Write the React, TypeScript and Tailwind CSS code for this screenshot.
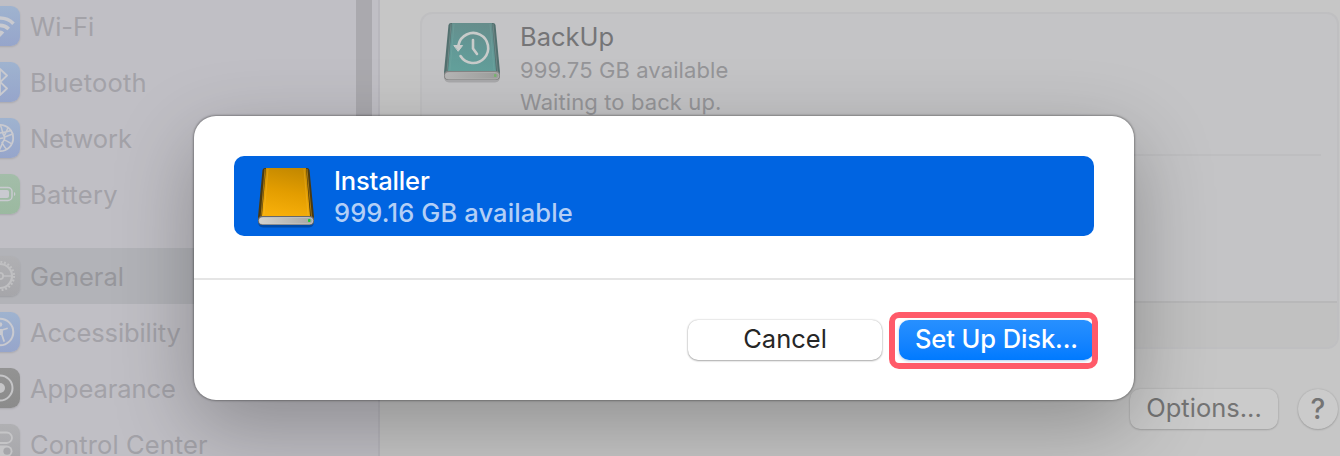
import type { ReactNode } from "react";

function Tile({ color, children }: { color: string; children: ReactNode }) {
  return (
    <span className={`-ml-5 block size-10 shrink-0 rounded-[9px] shadow-[0_1px_2px_rgba(0,0,0,0.12)] ${color}`}>
      <svg viewBox="0 0 40 40" className="size-10" fill="none" stroke="#c9cad0" strokeWidth="2" strokeLinecap="round" strokeLinejoin="round">
        {children}
      </svg>
    </span>
  );
}

const blue = "bg-linear-to-b from-[#9fb3cf] to-[#96a5cb]";
const gray = "bg-linear-to-b from-[#b0b0b3] to-[#a6a6aa]";

function WifiIcon() {
  return (
    <g strokeLinecap="butt">
      <path d="M6.5 17.7a19 19 0 0 1 27 0" strokeWidth="3.6" />
      <path d="M11.3 23a12.3 12.3 0 0 1 17.4 0" strokeWidth="3.6" />
      <path d="M20 31l-4.3-4.6a6 6 0 0 1 8.6 0z" fill="#c9cad0" stroke="none" />
    </g>
  );
}

function BluetoothIcon() {
  return <path d="M13.5 13.5L27 26.5 20 33V7l7 6.5-13.5 13" strokeWidth="1.8" />;
}

function NetworkIcon() {
  return (
    <g strokeWidth="1.5">
      <circle cx="20" cy="20" r="13.2" strokeWidth="1.8" />
      <path d="M20 7c2.600 3 1.500 7 4 11 1 1.500 1.200 2 0 4-2 3.200-2.500 6-5 10.800M28 9.500c-1.500 3.500-2 6-4 8.500M24.700 19l8-3M24 22c2.500.500 4.500 2 7 3.500M20 15c5-.500 8-1.500 11-2.500M22 24.500c1.500 3 2.500 5 4.500 6.500M8 17c4 3 8 4.500 15 3M12 10c-1 8 1 14 7 22" />
    </g>
  );
}

function BatteryIcon() {
  return (
    <g>
      <rect x="5" y="13.500" width="27" height="13" rx="4" strokeWidth="1.500" />
      <rect x="8" y="16" width="21" height="8" rx="2" fill="#c9cad0" stroke="none" />
      <path d="M34 18v4c1.800-.700 1.800-3.300 0-4z" fill="#c9cad0" stroke="none" />
    </g>
  );
}

function GearIcon() {
  return (
    <g>
      <circle cx="20" cy="20" r="14" stroke="#c0c0c2" strokeWidth="2.200" strokeDasharray="1.900 1.765" strokeLinecap="butt" />
      <circle cx="20" cy="20" r="12" stroke="#c0c0c2" strokeWidth="2.200" />
      <circle cx="20" cy="20" r="3.200" stroke="#c0c0c2" strokeWidth="1.700" />
      <path d="M23.200 20H32M18.400 17.200 14 9.600M18.400 22.800 14 30.400" stroke="#c0c0c2" strokeWidth="1.700" />
    </g>
  );
}

function AccessibilityIcon() {
  return (
    <g>
      <circle cx="20" cy="20" r="13.300" />
      <circle cx="20" cy="12.500" r="2.300" fill="#c9cad0" stroke="none" />
      <path d="M13 16.500l5 1.500v5l-2 6M27 16.500 22 18v5l2 6" strokeWidth="1.800" />
      <path d="M18 17h4v6h-4z" fill="#c9cad0" stroke="none" />
    </g>
  );
}

function AppearanceIcon() {
  return (
    <g stroke="#c5c5c7">
      <circle cx="20" cy="20" r="12.500" />
      <circle cx="20" cy="20" r="5" fill="#c5c5c7" stroke="none" />
    </g>
  );
}

function ControlIcon() {
  return (
    <g stroke="#c5c5c7" strokeWidth="1.800">
      <rect x="7.500" y="8.500" width="24.500" height="10.500" rx="5.250" />
      <rect x="7" y="21.500" width="25.500" height="11.500" rx="5.750" fill="#c5c5c7" stroke="none" />
      <circle cx="27" cy="27.200" r="3.600" fill="#a6a6aa" stroke="none" />
    </g>
  );
}

function Row({ label, color, children, selected = false, tracking = "" }: { label: string; color: string; children: ReactNode; selected?: boolean; tracking?: string }) {
  return (
    <li className={`flex h-14 items-center gap-2.5 ${selected ? "w-[356px] bg-[#b2b3b8] text-[#97979c]" : "text-[#a3a2a8]"}`}>
      <Tile color={color}>{children}</Tile>
      <span className={`pt-0.5 whitespace-nowrap text-[25.5px] leading-8 ${tracking}`}>{label}</span>
    </li>
  );
}

function Drive({ id, variant }: { id: string; variant: "teal" | "gold" }) {
  const teal = variant === "teal";
  return (
    <svg viewBox="0 -1 60 64" className="h-16 w-[60px] shrink-0">
      <defs>
        <linearGradient id={id} x1="0.6" y1="0" x2="0.4" y2="1">
          <stop offset="0" stopColor={teal ? "#668d8b" : "#c48900"} />
          <stop offset="0.5" stopColor={teal ? "#629795" : "#e39d00"} />
          <stop offset="1" stopColor={teal ? "#63a09b" : "#f7af0a"} />
        </linearGradient>
        <linearGradient id={`${id}-base`} x1="0" y1="0" x2="1" y2="0">
          <stop offset="0" stopColor={teal ? "#b6b6b6" : "#d2d2cf"} />
          <stop offset="1" stopColor={teal ? "#9d9e9c" : "#a6a7a4"} />
        </linearGradient>
      </defs>
      <path d="M2 56Q2 62.500 7 62.500H53Q58 62.500 58 56z" fill="#000" opacity={teal ? 0.14 : 0.25} />
      <path d="M6.500 5Q7 3 9 3H51Q53 3 53.500 5L58 52V56H2V52z" fill={teal ? "#52706f" : "#4c390d"} />
      <path d="M9 4 5 52M51 4 55.500 52" stroke={teal ? "#758d8b" : "#b68514"} strokeWidth="0.800" />
      <path d="M10 3H50L54 51H6z" fill={`url(#${id})`} />
      <path d="M48 4 52 50M12 4 8 50" stroke={teal ? "#78aaa5" : "#f5bd3c"} strokeWidth="0.700" opacity="0.500" />
      <rect x="2" y="51" width="56" height="9" rx="4" fill={teal ? "#858585" : "#67696b"} />
      <rect x="3.200" y="52.500" width="53.600" height="6.500" rx="3.200" fill={`url(#${id}-base)`} stroke={teal ? "#b9b9b9" : "#d0d3d4"} strokeWidth="0.700" />
      <rect x="52" y="54" width="2.500" height="3" rx="0.700" fill={teal ? "#79b46f" : "#22c536"} />
      {teal && (
        <g fill="none" stroke="#c8cbca" strokeWidth="2.600" strokeLinecap="round" strokeLinejoin="round">
          <path d="M16.500 25A15 15 0 1 1 18.500 36" />
          <path d="M31 20V28.500L35 34" />
          <path d="M12.200 25.500H20.600L16.400 31z" fill="#c8cbca" strokeWidth="1" />
        </g>
      )}
    </svg>
  );
}

export default function App() {
  return (
    <div className="relative flex h-[456px] w-[1340px] overflow-hidden bg-[#c6c6c6] font-['Inter','Liberation_Sans',sans-serif]">
      <aside className="flex w-[380px] shrink-0 justify-between border-r-2 border-[#b8b7bd] bg-[#c0bfc5]">
        <ul className="w-[356px] shrink-0 -translate-y-0.5">
          <Row label="Wi-Fi" color={blue}><WifiIcon /></Row>
          <Row label="Bluetooth" color={blue} tracking="tracking-[0.22px]"><BluetoothIcon /></Row>
          <Row label="Network" color={blue} tracking="tracking-[-0.1px]"><NetworkIcon /></Row>
          <Row label="Battery" color="bg-linear-to-b from-[#a3bda9] to-[#9bb9a0]" tracking="tracking-[0.25px]"><BatteryIcon /></Row>
          <li className="h-[26px]" />
          <Row label="General" color={gray} selected><GearIcon /></Row>
          <Row label="Accessibility" color={blue} tracking="tracking-[-0.1px]"><AccessibilityIcon /></Row>
          <Row label="Appearance" color="bg-linear-to-b from-[#939393] to-[#8b8b8b]" tracking="tracking-[-0.1px]"><AppearanceIcon /></Row>
          <Row label="Control Center" color={gray} tracking="tracking-[0.1px]"><ControlIcon /></Row>
        </ul>
        <div className="mr-1.5 h-[300px] w-4 bg-[#aaa9ae]" />
      </aside>
      <main className="flex min-w-0 flex-1 flex-col pt-3 pl-10">
        <section className="flex h-[337px] w-[919px] shrink-0 flex-col overflow-hidden rounded-xl border-2 border-[#bfbfc1] bg-[#c4c4c6]">
          <div className="flex h-[140px] gap-[18px] pt-[5px] pl-5">
            <Drive id="backup" variant="teal" />
            <div className="flex-1">
              <h2 className="pt-px text-[25.5px] leading-[34px] text-[#757577]">BackUp</h2>
              <p className="text-[22px] leading-8 tracking-[0.1px] text-[#959598]">999.75 GB available</p>
              <p className="text-[22px] leading-8 tracking-[0.1px] text-[#959598]">Waiting to back up.</p>
            </div>
          </div>
          <div className="mr-4 ml-[98px] h-0.5 bg-[#bebec0]" />
          <div className="flex-1" />
          <div className="h-[46px] border-t-2 border-[#b8b8b9] bg-[#c1c1c1]" />
        </section>
        <div className="flex justify-end gap-5 pt-10 pr-0.5">
          <button className="h-10 w-[148px] rounded-[10px] bg-[#cbcbcb] pb-0.5 text-[25.5px] leading-9 text-[#747474] shadow-[0_0_2px_rgba(0,0,0,0.15),0_1px_2px_rgba(0,0,0,0.15)]">Options...</button>
          <button className="size-10 rounded-full bg-[#cbcbcb] text-[28px] leading-10 font-medium text-[#747474] shadow-[0_0_2px_rgba(0,0,0,0.15),0_1px_2px_rgba(0,0,0,0.15)]">?</button>
        </div>
      </main>
      <div role="dialog" className="absolute top-[116px] left-[194px] flex h-[284px] w-[940px] flex-col rounded-[22px] bg-white shadow-[0_0_2px_1px_rgba(0,0,0,0.3),0_26px_80px_rgba(0,0,0,0.28)]">
        <div className="h-[162px] px-10 pt-10">
          <div className="flex h-20 gap-[18px] rounded-[10px] bg-[#0064e1] pt-2 pl-[22px]">
            <Drive id="installer" variant="gold" />
            <div>
              <h2 className="text-[25.5px] leading-[34px] font-medium tracking-[-0.15px] text-white">Installer</h2>
              <p className="text-[25.5px] leading-[30px] font-[450] tracking-[0.12px] text-[#b3cff6]">999.16 GB available</p>
            </div>
          </div>
        </div>
        <div className="flex h-[122px] justify-end gap-[17px] border-t-2 border-[#e5e5e5] pt-10 pr-10">
          <button className="h-10 w-[194px] rounded-[10px] bg-white pb-0.5 text-[25.5px] leading-9 text-[#262626] shadow-[0_0_2px_rgba(0,0,0,0.28),0_1px_2px_rgba(0,0,0,0.28)]">Cancel</button>
          <button className="relative h-10 w-[195px] rounded-[10px] bg-linear-to-b from-[#2790ff] to-[#007aff] pb-0.5 text-[25.5px] leading-9 font-medium tracking-[-0.1px] whitespace-nowrap text-white shadow-[0_1px_3px_rgba(0,80,180,0.3)]">
            Set Up Disk...
            <span className="absolute -top-2 -left-[10.500px] h-[57px] w-[209px] rounded-[10px] border-6 border-[#ff5a69]" />
          </button>
        </div>
      </div>
    </div>
  );
}
